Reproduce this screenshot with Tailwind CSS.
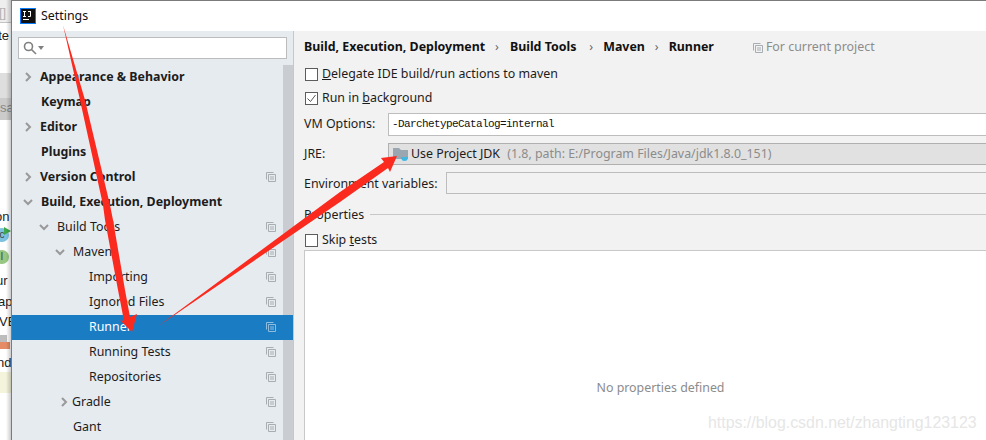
<!DOCTYPE html>
<html lang="en">
<head>
  <meta charset="UTF-8" />
  <title>Settings</title>
  <script src="https://cdn.jsdelivr.net/npm/@tailwindcss/browser@4"></script>
</head>
<body class="relative w-[986px] h-[440px] overflow-hidden bg-white font-['Noto_Sans',sans-serif] text-[12.4px] text-[#1c1c1c]">
  <div class="flex h-[440px]">
    <!-- window behind the dialog -->
    <div class="w-[11px] shrink-0 relative overflow-hidden bg-white text-[13px] font-['Liberation_Sans',sans-serif]">
      <div class="h-[22px] bg-[#eeeeee]"></div>
      <div class="h-[1px] bg-[#c4c4c4]"></div>
      <div class="absolute left-[-1px] top-[3px] text-[#b0b0b0]">[]</div>
      <div class="absolute left-[-9px] top-[26px]">ate</div>
      <div class="absolute left-0 top-[73px] w-[11px] h-[25px] bg-[#dedede]"></div>
      <div class="absolute left-0 top-[98px] w-[11px] h-[22px] bg-[#cbcbcb] text-[#888888]">sa</div>
      <div class="absolute left-[-5px] top-[207px]">on</div>
      <div class="absolute left-[-5px] top-[228px] w-[14px] h-[14px] rounded-full bg-[#7cc1e0] text-[10px] leading-[14px] text-center text-[#444444]">c</div>
      <svg class="absolute left-[4px] top-[227px]" width="7" height="8" viewBox="0 0 7 8"><path d="M0 0l7 4-7 4z" fill="#3ea84a"/></svg>
      <div class="absolute left-[-5px] top-[250px] w-[14px] h-[14px] rounded-full bg-[#97c783] text-[10px] leading-[14px] text-center text-[#444444]">I</div>
      <div class="absolute left-[-4px] top-[271px]">ur</div>
      <div class="absolute left-[-2px] top-[292px]">ap</div>
      <div class="absolute left-[-1px] top-[312px]">VE</div>
      <div class="absolute left-0 top-[335px] w-[7px] h-[7px] bg-[#bdbdbd]"></div>
      <div class="absolute left-0 top-[342px] w-[10px] h-[7px] bg-[#e58b66]"></div>
      <div class="absolute left-[-3px] top-[353px]">nd</div>
      <div class="absolute left-0 top-[372px] w-[11px] h-[21px] bg-[#f4f4dc]"></div>
      <div class="absolute right-0 top-0 w-[5px] h-[440px] bg-linear-to-r from-transparent to-black/20"></div>
    </div>
    <!-- settings dialog -->
    <div class="flex-1 min-w-0 flex flex-col border-l border-t border-[#7b7b7b] bg-white">
      <div class="h-[30px] shrink-0 flex items-center pl-[8px] gap-[5px] bg-white text-[#111111]">
        <svg width="16" height="16" viewBox="0 0 16 16"><rect x="0" y="0" width="16" height="16" fill="#087cfa"/><rect x="1" y="1" width="14" height="14" fill="#111111"/><rect x="3" y="11" width="6" height="1" fill="#ffffff"/><path d="M3 3h3v1H5v4h1v1H3V8h1V4H3zM8 3h3v5q0 1-1 1H8V8h2V4H8z" fill="#ffffff"/></svg>
        <span>Settings</span>
      </div>
      <div class="flex-1 flex min-h-0">
        <!-- sidebar -->
        <div class="w-[282px] shrink-0 flex flex-col bg-[#e6ebf0] border-r border-[#c4c8cc]">
          <div class="h-[34px] shrink-0 flex items-center px-[6px]">
            <div class="w-[269px] h-[22px] flex items-center gap-[1px] pl-[4px] bg-white border border-[#bcbcbc]">
              <svg width="14" height="14" viewBox="0 0 14 14" fill="none" stroke="#808080" stroke-width="1.6"><circle cx="5.5" cy="5.5" r="4"/><path d="M8.5 8.500l4.500 4.500"/></svg>
              <svg width="6" height="4" viewBox="0 0 6 4"><path d="M0 0h6L3 4z" fill="#808080"/></svg>
            </div>
          </div>
          <div class="flex-1 flex min-h-0">
            <div class="w-[271px] shrink-0 flex flex-col">
              <div class="h-[25px] pb-[1px] flex items-center pl-[12px] font-bold"><svg class="w-[8px] h-[10px] mr-[8px]" viewBox="0 0 8 10" fill="none" stroke="#999999" stroke-width="2"><path d="M2 1l4 4-4 4"/></svg>Appearance &amp; Behavior</div>
              <div class="h-[25px] pb-[1px] flex items-center pl-[29px] font-bold">Keymap</div>
              <div class="h-[25px] pb-[1px] flex items-center pl-[12px] font-bold"><svg class="w-[8px] h-[10px] mr-[8px]" viewBox="0 0 8 10" fill="none" stroke="#999999" stroke-width="2"><path d="M2 1l4 4-4 4"/></svg>Editor</div>
              <div class="h-[25px] pb-[1px] flex items-center pl-[29px] font-bold">Plugins</div>
              <div class="h-[25px] pb-[1px] flex items-center pl-[12px] font-bold"><svg class="w-[8px] h-[10px] mr-[8px]" viewBox="0 0 8 10" fill="none" stroke="#999999" stroke-width="2"><path d="M2 1l4 4-4 4"/></svg>Version Control<svg class="ml-auto mr-[7px] w-[10px] h-[10px]" viewBox="0 0 10 10" fill="none" stroke="#a8adb2"><path d="M.5 7.500v-7h7M2.500 2.500h7v7h-7zM4 5h4M4 7h4"/></svg></div>
              <div class="h-[25px] pb-[1px] flex items-center pl-[11px] font-bold"><svg class="w-[10px] h-[8px] mr-[8px]" viewBox="0 0 10 8" fill="none" stroke="#999999" stroke-width="2"><path d="M1 2l4 4 4-4"/></svg>Build, Execution, Deployment</div>
              <div class="h-[25px] pb-[1px] flex items-center pl-[27px]"><svg class="w-[10px] h-[8px] mr-[8px]" viewBox="0 0 10 8" fill="none" stroke="#999999" stroke-width="2"><path d="M1 2l4 4 4-4"/></svg>Build Tools<svg class="ml-auto mr-[7px] w-[10px] h-[10px]" viewBox="0 0 10 10" fill="none" stroke="#a8adb2"><path d="M.5 7.500v-7h7M2.500 2.500h7v7h-7zM4 5h4M4 7h4"/></svg></div>
              <div class="h-[25px] pb-[1px] flex items-center pl-[43px]"><svg class="w-[10px] h-[8px] mr-[8px]" viewBox="0 0 10 8" fill="none" stroke="#999999" stroke-width="2"><path d="M1 2l4 4 4-4"/></svg>Maven<svg class="ml-auto mr-[7px] w-[10px] h-[10px]" viewBox="0 0 10 10" fill="none" stroke="#a8adb2"><path d="M.5 7.500v-7h7M2.500 2.500h7v7h-7zM4 5h4M4 7h4"/></svg></div>
              <div class="h-[25px] pb-[1px] flex items-center pl-[77px]">Importing<svg class="ml-auto mr-[7px] w-[10px] h-[10px]" viewBox="0 0 10 10" fill="none" stroke="#a8adb2"><path d="M.5 7.500v-7h7M2.500 2.500h7v7h-7zM4 5h4M4 7h4"/></svg></div>
              <div class="h-[25px] pb-[1px] flex items-center pl-[77px]">Ignored Files<svg class="ml-auto mr-[7px] w-[10px] h-[10px]" viewBox="0 0 10 10" fill="none" stroke="#a8adb2"><path d="M.5 7.500v-7h7M2.500 2.500h7v7h-7zM4 5h4M4 7h4"/></svg></div>
              <div class="relative z-10 h-[25px] pb-[1px] w-[281px] flex items-center pl-[77px] pr-[10px] bg-[#1a7dc4] text-white">Runner<svg class="ml-auto mr-[7px] w-[10px] h-[10px]" viewBox="0 0 10 10" fill="none" stroke="#8fbde0"><path d="M.5 7.500v-7h7M2.500 2.500h7v7h-7zM4 5h4M4 7h4"/></svg></div>
              <div class="h-[25px] pb-[1px] flex items-center pl-[77px]">Running Tests<svg class="ml-auto mr-[7px] w-[10px] h-[10px]" viewBox="0 0 10 10" fill="none" stroke="#a8adb2"><path d="M.5 7.500v-7h7M2.500 2.500h7v7h-7zM4 5h4M4 7h4"/></svg></div>
              <div class="h-[25px] pb-[1px] flex items-center pl-[77px]">Repositories<svg class="ml-auto mr-[7px] w-[10px] h-[10px]" viewBox="0 0 10 10" fill="none" stroke="#a8adb2"><path d="M.5 7.500v-7h7M2.500 2.500h7v7h-7zM4 5h4M4 7h4"/></svg></div>
              <div class="h-[25px] pb-[1px] flex items-center pl-[48px]"><svg class="w-[8px] h-[10px] mr-[4px]" viewBox="0 0 8 10" fill="none" stroke="#999999" stroke-width="2"><path d="M2 1l4 4-4 4"/></svg>Gradle<svg class="ml-auto mr-[7px] w-[10px] h-[10px]" viewBox="0 0 10 10" fill="none" stroke="#a8adb2"><path d="M.5 7.500v-7h7M2.500 2.500h7v7h-7zM4 5h4M4 7h4"/></svg></div>
              <div class="h-[25px] pb-[1px] flex items-center pl-[61px]">Gant<svg class="ml-auto mr-[7px] w-[10px] h-[10px]" viewBox="0 0 10 10" fill="none" stroke="#a8adb2"><path d="M.5 7.500v-7h7M2.500 2.500h7v7h-7zM4 5h4M4 7h4"/></svg></div>
            </div>
            <div class="w-[10px] shrink-0 bg-[#c9ccd0]"></div>
          </div>
        </div>
        <!-- content -->
        <div class="flex-1 min-w-0 flex flex-col bg-[#f2f2f2] pl-[10px] pt-[4px]">
          <div class="h-[25px] flex items-center whitespace-nowrap font-bold text-[#111111]">
            <span>Build, Execution, Deployment</span>
            <span class="ml-[10px] mr-[11px] font-normal text-[#666666]">›</span>
            <span>Build Tools</span>
            <span class="ml-[13px] mr-[10px] font-normal text-[#666666]">›</span>
            <span>Maven</span>
            <span class="mx-[10px] font-normal text-[#666666]">›</span>
            <span>Runner</span>
            <svg class="ml-[39px] mr-[3px] w-[10px] h-[10px]" viewBox="0 0 10 10" fill="none" stroke="#a8adb2"><path d="M.5 7.500v-7h7M2.500 2.500h7v7h-7zM4 5h4M4 7h4"/></svg>
            <span class="font-normal text-[#8c8c8c]">For current project</span>
          </div>
          <div class="h-[24px] mt-[2px] flex items-center gap-[4px] pl-[1px]"><span class="w-[13px] h-[13px] bg-white border border-[#5c5c5c]"></span><span><u>D</u>elegate IDE build/run actions to maven</span></div>
          <div class="h-[24px] flex items-center gap-[4px] pl-[1px]"><svg class="w-[13px] h-[13px]" viewBox="0 0 13 13"><rect x=".5" y=".5" width="12" height="12" fill="#ffffff" stroke="#5c5c5c"/><path d="M2.500 6.500l3 3 5-6.500" fill="none" stroke="#555555"/></svg><span>Run in <u>b</u>ackground</span></div>
          <div class="h-[29px] flex items-center">
            <span class="w-[84px] shrink-0">VM Options:</span>
            <div class="flex-1 h-[23px] flex items-center pl-[3px] bg-white border-y border-l border-[#bdbdbd] font-['Liberation_Mono',monospace] text-[11px] tracking-[-0.6px] text-[#111111]">-DarchetypeCatalog=internal</div>
          </div>
          <div class="h-[30px] flex items-center">
            <span class="w-[84px] shrink-0">JRE:</span>
            <div class="flex-1 h-[22px] flex items-center pl-[4px] gap-[2px] bg-[#e1e1e1] border-y border-l border-[#b0b0b0] whitespace-nowrap">
              <svg class="w-[16px] h-[15px]" viewBox="0 0 16 15"><path d="M0 1h6l2 2h7v9H0z" fill="#9aa7b0"/><path d="M8 10h7v1.500q-1 2.500-3.500 2.500T8 11.500z" fill="#40b6e0"/></svg>
              <span>Use Project JDK <span class="ml-[4px] text-[#8c8c8c]">(1.8, path: E:/Program Files/Java/jdk1.8.0_151)</span></span>
            </div>
          </div>
          <div class="h-[28px] flex items-center">
            <span class="w-[142px] shrink-0 mt-[2px]">Environment variables:</span>
            <div class="flex-1 h-[22px] bg-[#f2f2f2] border-y border-l border-[#bdbdbd]"></div>
          </div>
          <div class="h-[34px] flex items-center gap-[6px]"><span class="mt-[2px]">Properties</span><div class="flex-1 h-px bg-[#c8c8c8]"></div></div>
          <div class="h-[19px] flex items-center gap-[4px] pl-[1px]"><span class="w-[13px] h-[13px] bg-white border border-[#5c5c5c]"></span><span>Skip <u>t</u>ests</span></div>
          <div class="flex-1 flex items-center justify-center bg-white border-t border-l border-[#c8c8c8] text-[#8c8c8c]">
            <span class="mb-[-86px] ml-[30px]">No properties defined</span>
          </div>
        </div>
      </div>
    </div>
  </div>
  <!-- annotation arrows and watermark lying over the screenshot -->
  <svg class="absolute left-0 top-0 z-20 pointer-events-none" width="986" height="440" viewBox="0 0 986 440">
    <path d="M63 25L85 100L110 205L113 220L125 290L130 317L137 314L132 332L120 320L124 321L118 290L105 220L103 205L80 100z" fill="#fb2a1f"/>
    <path d="M157 327L340 192L384 162L381 158L397 156L390 172L388 168L340 202z" fill="#fb2a1f"/>
  </svg>
  <div class="absolute left-[708px] top-[411px] font-['Liberation_Sans',sans-serif] text-[15.9px] text-[#e6e6e6]">https://blog.csdn.net/zhangting123123</div>
</body>
</html>
